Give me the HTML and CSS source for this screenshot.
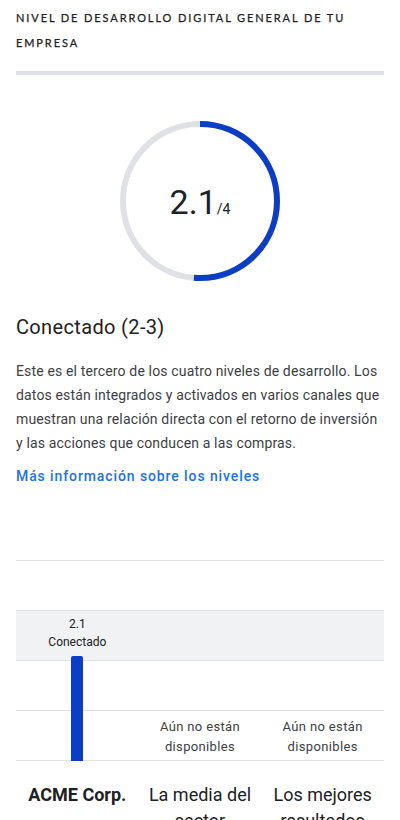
FILE: index.html
```html
<!DOCTYPE html>
<html lang="es">
<head>
<meta charset="utf-8">
<link rel="stylesheet" href="styles.css">
</head>
<body>
<main class="page">
  <h1 class="eyebrow">Nivel de desarrollo digital general de tu empresa</h1>
  <div class="rule"></div>
  <div class="gauge">
    <svg class="gauge-svg" width="160" height="160" viewBox="0 0 160 160">
      <circle cx="80" cy="80" r="77" fill="none" stroke="#e0e1e6" stroke-width="6"/>
      <circle cx="80" cy="80" r="77" fill="none" stroke="#0b3dc6" stroke-width="6"
        stroke-dasharray="247.7 483.8" transform="rotate(-90 80 80)"/>
    </svg>
    <div class="gauge-value"><span class="big">2.1</span><span class="small">/4</span></div>
  </div>
  <h2 class="level">Conectado (2-3)</h2>
  <p class="desc">Este es el tercero de los cuatro niveles de desarrollo. Los datos están integrados y activados en varios canales que muestran una relación directa con el retorno de inversión y las acciones que conducen a las compras.</p>
  <a class="link" href="#">Más información sobre los niveles</a>

  <section class="chart">
    <div class="plot">
      <div class="band"></div>
      <div class="band band-hl"></div>
      <div class="band"></div>
      <div class="band"></div>
      <div class="cols">
        <div class="col">
          <div class="bar-label">2.1<br>Conectado</div>
          <div class="bar" style="height:105px"></div>
        </div>
        <div class="col">
          <div class="na">Aún no están<br>disponibles</div>
        </div>
        <div class="col">
          <div class="na">Aún no están<br>disponibles</div>
        </div>
      </div>
    </div>
    <div class="names">
      <div class="name name-main">ACME Corp.</div>
      <div class="name">La media del sector</div>
      <div class="name">Los mejores resultados</div>
    </div>
  </section>
</main>
</body>
</html>
```

FILE: styles.css
```css
html, body {
  margin: 0;
  padding: 0;
  background: #ffffff;
}
.page {
  padding: 0 16px;
  font-family: Roboto, "Liberation Sans", Arial, sans-serif;
  color: #3c4043;
  overflow: hidden;
  height: 820px;
  box-sizing: border-box;
}
.eyebrow {
  margin: 0;
  padding-top: 5px;
  font-family: Lato, "Open Sans", sans-serif;
  font-size: 11px;
  font-weight: 400;
  letter-spacing: 1.9px;
  line-height: 25px;
  text-transform: uppercase;
  color: #202124;
  -webkit-text-stroke: 0.25px #202124;
}
.rule {
  height: 4px;
  background: #e0e1e6;
  margin-top: 16px;
}
.gauge {
  position: relative;
  width: 160px;
  height: 160px;
  margin: 46px auto 0;
}
.gauge-svg {
  display: block;
}
.gauge-value {
  position: absolute;
  inset: 0;
  display: flex;
  align-items: center;
  justify-content: center;
  color: #202124;
  padding-top: 2px;
}
.big {
  font-size: 34px;
  line-height: 1;
}
.small {
  font-size: 14px;
  align-self: center;
  margin-top: 14px;
}
.level {
  margin: 32px 0 0;
  font-size: 20px;
  font-weight: 400;
  letter-spacing: 0.35px;
  line-height: 28px;
  color: #202124;
}
.desc {
  margin: 18px 0 0;
  font-size: 14px;
  line-height: 24px;
  letter-spacing: 0.15px;
  color: #3c4043;
}
.link {
  display: block;
  margin-top: 9px;
  font-size: 14px;
  font-weight: 500;
  letter-spacing: 0.9px;
  line-height: 24px;
  color: #1a73e8;
  text-decoration: none;
}
.chart {
  margin-top: 72px;
}
.plot {
  position: relative;
  border-top: 1px solid #e0e1e4;
}
.band {
  height: 49px;
  border-bottom: 1px solid #e0e1e4;
}
.band-hl {
  background: #f1f2f4;
}
.cols {
  position: absolute;
  inset: 0;
  display: grid;
  grid-template-columns: repeat(3, 1fr);
}
.col {
  display: flex;
  flex-direction: column;
  justify-content: flex-end;
  align-items: center;
  font-size: 12px;
  color: #3c4043;
}
.bar-label {
  text-align: center;
  line-height: 18px;
  margin-bottom: 5px;
  color: #202124;
}
.bar {
  width: 12px;
  background: #0b3dc6;
  border-radius: 2px 2px 0 0;
}
.na {
  text-align: center;
  font-size: 13px;
  letter-spacing: 0.35px;
  line-height: 20px;
  padding-bottom: 4px;
  color: #3c4043;
}
.names {
  display: grid;
  grid-template-columns: repeat(3, 1fr);
  margin-top: 21px;
}
.name {
  text-align: center;
  font-size: 18px;
  line-height: 26px;
  color: #202124;
  padding: 0 8px;
}
.name-main {
  font-weight: 700;
}
```
